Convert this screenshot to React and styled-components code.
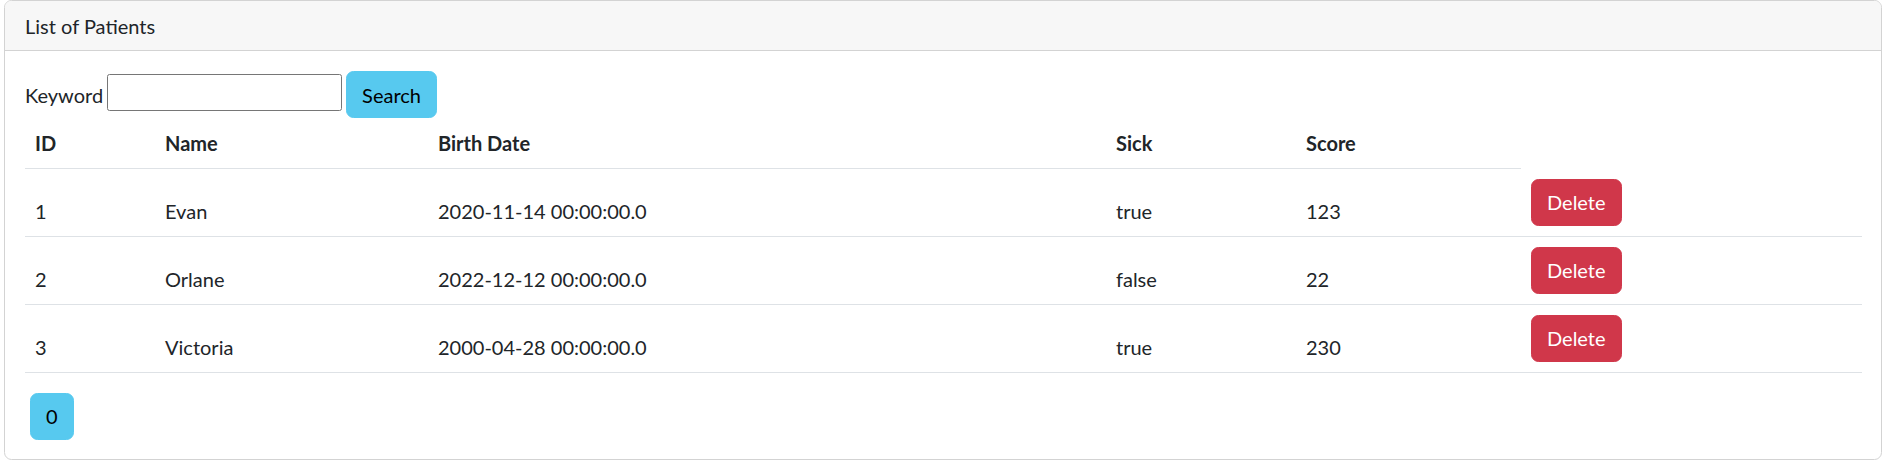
import React from "react";
import styled, { createGlobalStyle } from "styled-components";

const Global = createGlobalStyle`
  html, body { margin: 0; padding: 0; background: #ffffff; }
  body {
    font-family: "Segoe UI", Lato, "Noto Sans", "Liberation Sans", sans-serif;
    font-size: 20px;
    line-height: 30px;
    color: #212529;
  }
  * { box-sizing: border-box; }
`;

const Card = styled.section`
  margin: 0 0 0 4px;
  width: 1878px;
  border: 1px solid #d3d3d3;
  border-radius: 7.5px;
  background: #fff;
  overflow: hidden;
`;

const CardHeader = styled.header`
  padding: 10px 20px 9px;
  background: #f7f7f7;
  border-bottom: 1px solid #d3d3d3;
  font-size: 20px;
  line-height: 30px;
`;

const CardBody = styled.div`
  padding: 20px 20px 19px;
`;

const SearchForm = styled.form`
  display: flex;
  align-items: baseline;
  margin: 0;
`;

const Label = styled.label`
  margin-right: 4px;
`;

const Input = styled.input`
  width: 235px;
  height: 37px;
  margin: 0 4px 0 0;
  border: 1px solid #767676;
  border-radius: 2.5px;
  font-family: inherit;
  font-size: 16px;
  padding: 2px 4px;
  position: relative;
  top: -4px;
`;

const Button = styled.button`
  display: inline-block;
  border: 1px solid ${(p) => p.$bg};
  background: ${(p) => p.$bg};
  color: ${(p) => p.$fg};
  font-family: inherit;
  font-size: 20px;
  line-height: 30px;
  padding: 7.5px 15px;
  border-radius: 7.5px;
  cursor: pointer;
  margin-left: ${(p) => p.$ml || 0}px;
`;

const Table = styled.table`
  width: 1837px;
  table-layout: fixed;
  border-collapse: collapse;
  margin-bottom: 20px;
`;

const Col = styled.col`
  width: ${(p) => p.$w}px;
`;

const Th = styled.th`
  text-align: left;
  font-weight: 700;
  padding: 10px 10px;
  vertical-align: bottom;
  border-bottom: 1px solid #dee2e6;
`;

const Td = styled.td`
  padding: 10px 10px;
  vertical-align: bottom;
  border-bottom: 1px solid #dee2e6;
`;

const Pager = styled.nav`
  display: flex;
`;

const patients = [
  { id: 1, name: "Evan", birth: "2020-11-14 00:00:00.0", sick: "true", score: 123 },
  { id: 2, name: "Orlane", birth: "2022-12-12 00:00:00.0", sick: "false", score: 22 },
  { id: 3, name: "Victoria", birth: "2000-04-28 00:00:00.0", sick: "true", score: 230 },
];

const widths = [130, 273, 678, 190, 225, 341];
const INFO = "#57c9ef";
const DANGER = "#d0374a";

export default function App() {
  return (
    <>
      <Global />
      <Card>
        <CardHeader>List of Patients</CardHeader>
        <CardBody>
          <SearchForm onSubmit={(e) => e.preventDefault()}>
            <Label htmlFor="kw">Keyword</Label>
            <Input id="kw" type="text" />
            <Button type="submit" $bg={INFO} $fg="#000">Search</Button>
          </SearchForm>
          <Table>
            <colgroup>
              {widths.map((w, i) => (
                <Col key={i} $w={w} />
              ))}
            </colgroup>
            <thead>
              <tr>
                <Th>ID</Th>
                <Th>Name</Th>
                <Th>Birth Date</Th>
                <Th>Sick</Th>
                <Th>Score</Th>
              </tr>
            </thead>
            <tbody>
              {patients.map((p) => (
                <tr key={p.id}>
                  <Td>{p.id}</Td>
                  <Td>{p.name}</Td>
                  <Td>{p.birth}</Td>
                  <Td>{p.sick}</Td>
                  <Td>{p.score}</Td>
                  <Td>
                    <Button type="button" $bg={DANGER} $fg="#fff">Delete</Button>
                  </Td>
                </tr>
              ))}
            </tbody>
          </Table>
          <Pager>
            <Button type="button" $bg={INFO} $fg="#000" $ml={5}>0</Button>
          </Pager>
        </CardBody>
      </Card>
    </>
  );
}
